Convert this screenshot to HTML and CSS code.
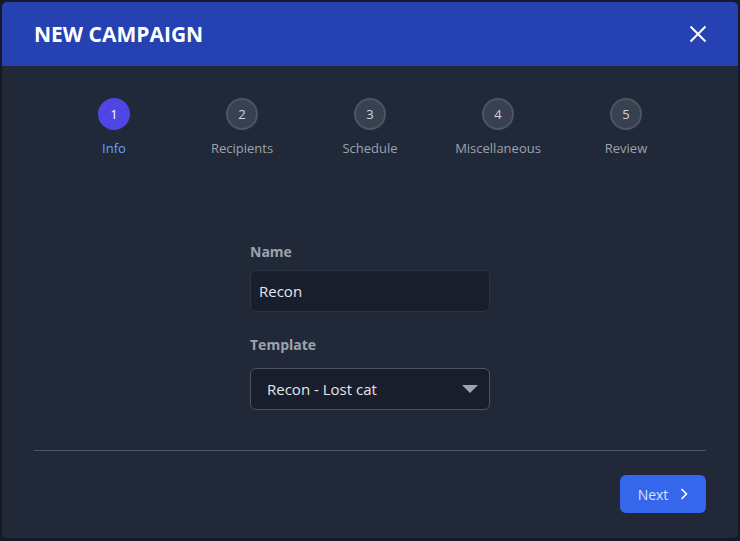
FILE: index.html
```html
<!DOCTYPE html>
<html lang="en">
<head>
  <meta charset="UTF-8" />
  <meta name="viewport" content="width=device-width, initial-scale=1.0"/>
  <title>New campaign</title>
  <link rel="stylesheet" href="styles.css">
</head>
<body>
  <div class="modal">
    <div class="modal-header">
      <h1 class="modal-title">NEW CAMPAIGN</h1>
      <button class="close" aria-label="Close">
        <svg width="18" height="18" viewBox="0 0 18 18">
          <path d="M1.5 1.5 L16.5 16.5 M16.5 1.5 L1.5 16.5" stroke="#ffffff" stroke-width="2" fill="none"/>
        </svg>
      </button>
    </div>

    <div class="modal-body">
      <div class="steps">
        <div class="step active">
          <div class="step-circle">1</div>
          <div class="step-label">Info</div>
        </div>
        <div class="step">
          <div class="step-circle">2</div>
          <div class="step-label">Recipients</div>
        </div>
        <div class="step">
          <div class="step-circle">3</div>
          <div class="step-label">Schedule</div>
        </div>
        <div class="step">
          <div class="step-circle">4</div>
          <div class="step-label">Miscellaneous</div>
        </div>
        <div class="step">
          <div class="step-circle">5</div>
          <div class="step-label">Review</div>
        </div>
      </div>

      <form class="form">
        <label class="field-label" for="name">Name</label>
        <input class="input" id="name" type="text" value="Recon">

        <label class="field-label" for="template">Template</label>
        <div class="select">
          <span>Recon - Lost cat</span>
          <svg width="16" height="8" viewBox="0 0 16 8">
            <path d="M0 0 L16 0 L8 8 Z" fill="#a0a6b0"/>
          </svg>
        </div>
      </form>

      <div class="divider"></div>

      <div class="footer">
        <button class="next">
          Next
          <svg width="8" height="12" viewBox="0 0 8 12">
            <path d="M1.5 1 L6.5 6 L1.5 11" stroke="#ffffff" stroke-width="1.6" fill="none"/>
          </svg>
        </button>
      </div>
    </div>
  </div>
</body>
</html>
```

FILE: styles.css
```css
body {
  margin: 0;
  background-color: #141a28;
  font-family: 'Open Sans', 'Noto Sans', sans-serif;
  height: 541px;
  padding: 2px 2px 0 2px;
  box-sizing: border-box;
  overflow: hidden;
}

.modal {
  width: 736px;
  height: 536px;
  background-color: #212938;
  border-radius: 5px;
  overflow: hidden;
}

.modal-header {
  height: 64px;
  background-color: #2541b2;
  display: flex;
  align-items: center;
  justify-content: space-between;
  padding: 0 31px 0 32px;
}

.modal-title {
  margin: 0;
  color: #ffffff;
  font-size: 21px;
  font-weight: 700;
  letter-spacing: 0;
}

.close {
  background: none;
  border: none;
  padding: 0;
  width: 18px;
  height: 18px;
  cursor: pointer;
}

.modal-body {
  padding: 32px 32px 0 32px;
}

.steps {
  display: grid;
  grid-template-columns: repeat(5, 128px);
  padding: 0 16px;
}

.step {
  display: flex;
  flex-direction: column;
  align-items: center;
}

.step-circle {
  width: 32px;
  height: 32px;
  border-radius: 50%;
  box-sizing: border-box;
  background-color: #374151;
  border: 2px solid #4b5563;
  color: #d1d5db;
  font-size: 13px;
  display: flex;
  align-items: center;
  justify-content: center;
}

.step.active .step-circle {
  background-color: #4f46e5;
  border-color: #4f46e5;
  color: #ffffff;
}

.step-label {
  margin-top: 9px;
  font-size: 13px;
  color: #9ca3af;
}

.step.active .step-label {
  color: #60a5fa;
}

.form {
  width: 240px;
  margin: 85px auto 0 auto;
  display: flex;
  flex-direction: column;
}

.field-label {
  color: #9ca3af;
  font-size: 14px;
  font-weight: 700;
  margin-bottom: 9px;
}

.input {
  height: 42px;
  box-sizing: border-box;
  background-color: #181e2c;
  border: 1px solid #2d3646;
  border-radius: 6px;
  color: #e5e7eb;
  font-family: inherit;
  font-size: 15px;
  padding: 0 8px;
  margin-bottom: 23px;
  outline: none;
}

.select {
  height: 42px;
  box-sizing: border-box;
  margin-top: 5px;
  background-color: #181e2c;
  border: 1px solid #4b5563;
  border-radius: 6px;
  color: #e5e7eb;
  font-size: 15px;
  padding: 0 11px 0 16px;
  display: flex;
  align-items: center;
  justify-content: space-between;
}

.divider {
  height: 1px;
  background-color: #4b5563;
  margin-top: 40px;
}

.footer {
  display: flex;
  justify-content: flex-end;
  margin-top: 24px;
}

.next {
  width: 86px;
  height: 38px;
  border: none;
  border-radius: 6px;
  background-color: #3467eb;
  color: #dbe4ff;
  font-family: inherit;
  font-size: 14px;
  display: flex;
  align-items: center;
  justify-content: center;
  gap: 12px;
  cursor: pointer;
}
```
